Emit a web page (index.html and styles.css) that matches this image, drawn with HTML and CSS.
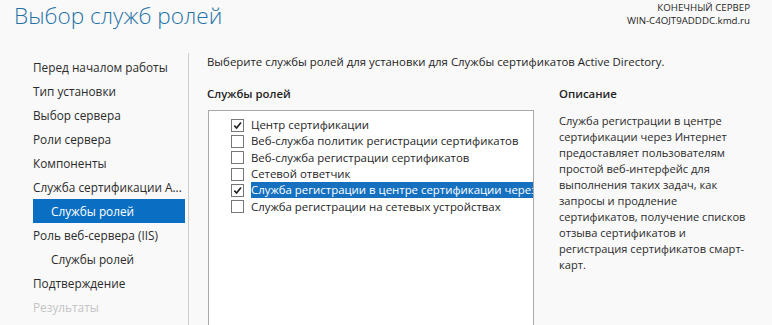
FILE: index.html
```html
<!DOCTYPE html>
<html lang="ru">
<head>
    <meta charset="UTF-8">
    <title>Выбор служб ролей</title>
    <link rel="stylesheet" href="styles.css">
</head>
<body>
    <div class="wizard">
        <div class="header">
            <h1 class="title">Выбор служб ролей</h1>
            <div class="target">
                <div>КОНЕЧНЫЙ СЕРВЕР</div>
                <div>WIN-C4OJT9ADDDC.kmd.ru</div>
            </div>
        </div>
        <div class="body">
            <ul class="nav">
                <li>Перед началом работы</li>
                <li>Тип установки</li>
                <li>Выбор сервера</li>
                <li>Роли сервера</li>
                <li>Компоненты</li>
                <li>Служба сертификации A...</li>
                <li class="sub active">Службы ролей</li>
                <li>Роль веб-сервера (IIS)</li>
                <li class="sub">Службы ролей</li>
                <li>Подтверждение</li>
                <li class="disabled">Результаты</li>
            </ul>
            <div class="main">
                <p class="intro">Выберите службы ролей для установки для Службы сертификатов Active Directory.</p>
                <div class="columns">
                    <div class="services">
                        <h2>Службы ролей</h2>
                        <div class="list">
                            <div class="row">
                                <span class="check checked"><svg viewBox="0 0 12 12"><path d="M2.5 6.2 L5 8.7 L9.8 2.8" /></svg></span>
                                <span class="label">Центр сертификации</span>
                            </div>
                            <div class="row">
                                <span class="check"></span>
                                <span class="label">Веб-служба политик регистрации сертификатов</span>
                            </div>
                            <div class="row">
                                <span class="check"></span>
                                <span class="label">Веб-служба регистрации сертификатов</span>
                            </div>
                            <div class="row">
                                <span class="check"></span>
                                <span class="label">Сетевой ответчик</span>
                            </div>
                            <div class="row selected">
                                <span class="check checked"><svg viewBox="0 0 12 12"><path d="M2.5 6.2 L5 8.7 L9.8 2.8" /></svg></span>
                                <span class="label">Служба регистрации в центре сертификации через Интернет</span>
                            </div>
                            <div class="row">
                                <span class="check"></span>
                                <span class="label">Служба регистрации на сетевых устройствах</span>
                            </div>
                        </div>
                    </div>
                    <div class="description">
                        <h2>Описание</h2>
                        <p>Служба регистрации в центре<br>
                        сертификации через Интернет<br>
                        предоставляет пользователям<br>
                        простой веб-интерфейс для<br>
                        выполнения таких задач, как<br>
                        запросы и продление<br>
                        сертификатов, получение списков<br>
                        отзыва сертификатов и<br>
                        регистрация сертификатов смарт-<br>
                        карт.</p>
                    </div>
                </div>
            </div>
        </div>
    </div>
</body>
</html>
```

FILE: styles.css
```css
body {
    margin: 0;
    padding: 0;
    background-color: #f9f9f9;
    font-family: "Open Sans", "Noto Sans", sans-serif;
    font-size: 11.4px;
    color: #1e1e1e;
    overflow: hidden;
}
.wizard {
    width: 772px;
    height: 325px;
    display: flex;
    flex-direction: column;
}
.header {
    height: 53px;
    display: flex;
    justify-content: space-between;
    align-items: flex-start;
}
.title {
    margin: 0;
    padding: 1px 0 0 14px;
    font-size: 22.6px;
    font-weight: 300;
    line-height: 30px;
    color: #1f73a8;
}
.target {
    padding: 1px 22px 0 0;
    text-align: right;
    font-size: 9.7px;
    line-height: 13px;
    color: #1e1e1e;
}
.body {
    flex: 1;
    display: flex;
    min-height: 0;
}
.nav {
    list-style: none;
    margin: 0;
    padding: 2px 3px 0 33px;
    width: 152px;
    border-right: 1px solid #cfcfcf;
    font-size: 11.8px;
}
.nav li {
    height: 24px;
    line-height: 24px;
    white-space: nowrap;
    color: #2b2b2b;
}
.nav li.sub {
    padding-left: 18px;
}
.nav li.active {
    background-color: #0a6fc2;
    color: #ffffff;
}
.nav li.disabled {
    color: #c4c4c4;
}
.main {
    flex: 1;
    padding-left: 18px;
    display: flex;
    flex-direction: column;
    min-height: 0;
}
.intro {
    margin: 0;
    line-height: 18px;
}
.columns {
    flex: 1;
    display: flex;
    gap: 25px;
    margin-top: 14px;
    min-height: 0;
}
h2 {
    margin: 0;
    font-size: 11.4px;
    font-weight: 600;
    line-height: 18px;
}
.services {
    width: 327px;
    display: flex;
    flex-direction: column;
}
.list {
    flex: 1;
    margin: 7px 0 0 1px;
    border: 1px solid #a9a9a9;
    border-bottom: none;
    background-color: #ffffff;
    padding: 6px 0 0 22px;
    overflow: hidden;
}
.row {
    display: flex;
    align-items: center;
    height: 16.3px;
    white-space: nowrap;
}
.check {
    width: 11px;
    height: 11px;
    border: 1px solid #777777;
    background-color: #ffffff;
    margin-right: 7px;
    flex-shrink: 0;
}
.check svg {
    display: block;
    width: 11px;
    height: 11px;
}
.check path {
    fill: none;
    stroke: #222222;
    stroke-width: 1.8;
}
.label {
    line-height: 16px;
    padding-right: 2px;
}
.row.selected .label {
    background-color: #1670c0;
    color: #ffffff;
}
.description {
    width: 205px;
}
.description p {
    margin: 10px 0 0 0;
    font-size: 11.1px;
    line-height: 16px;
    color: #2b2b2b;
}
```
